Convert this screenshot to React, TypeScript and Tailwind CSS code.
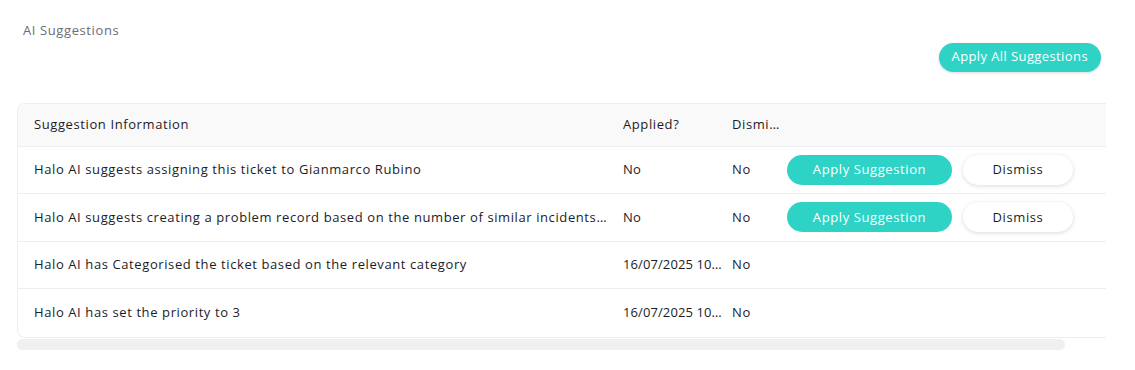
import React from 'react';

type Row = {
  info: string;
  applied: string;
  dismissed: string;
  actions: boolean;
};

const rows: Row[] = [
  { info: 'Halo AI suggests assigning this ticket to Gianmarco Rubino', applied: 'No', dismissed: 'No', actions: true },
  {
    info: 'Halo AI suggests creating a problem record based on the number of similar incidents logged recently',
    applied: 'No',
    dismissed: 'No',
    actions: true,
  },
  { info: 'Halo AI has Categorised the ticket based on the relevant category', applied: '16/07/2025 10:42', dismissed: 'No', actions: false },
  { info: 'Halo AI has set the priority to 3', applied: '16/07/2025 10:42', dismissed: 'No', actions: false },
];

const cols = 'grid grid-cols-[597px_109px_57px_1fr] items-center';

const App = () => {
  return (
    <div className="w-[1135px] h-[370px] bg-white font-['Open_Sans',sans-serif] text-[13px] tracking-[0.6px] text-[#1c1c28]">
      <div className="pl-[23px] pt-[21px] text-[13px] text-[#6b6b75]">AI Suggestions</div>

      <div className="flex justify-end pr-[34px] mt-[2px]">
        <button className="h-[29px] px-[13px] rounded-full bg-[#2ed3c6] text-white text-[13px] tracking-[0.4px] shadow-[0_1px_3px_rgba(0,0,0,0.15)]">
          Apply All Suggestions
        </button>
      </div>

      <div className="ml-[17px] mt-[31px] w-[1089px] overflow-hidden">
        <div className="border-l border-t border-b border-[#eceef3] rounded-l-lg">
          <div className={`${cols} h-[43px] bg-[#f9f9fa] border-b border-[#eceef3] rounded-tl-lg`}>
            <div className="pl-4">Suggestion Information</div>
            <div className="pl-2">Applied?</div>
            <div className="pl-2 truncate">Dismissed?</div>
            <div />
          </div>
          {rows.map((r, i) => (
            <div
              key={i}
              className={`${cols} h-[47.5px] ${i < rows.length - 1 ? 'border-b border-[#eceef3]' : ''}`}
            >
              <div className="pl-4 pr-2 truncate">{r.info}</div>
              <div className="pl-2 pr-[2px] truncate tracking-[0.1px]">{r.applied}</div>
              <div className="pl-2 truncate">{r.dismissed}</div>
              <div className="flex items-center gap-[11px] pl-[6px]">
                {r.actions && (
                  <>
                    <button className="w-[165px] h-[30px] rounded-full bg-[#2ed3c6] text-white text-[13px]">
                      Apply Suggestion
                    </button>
                    <button className="w-[110px] h-[30px] rounded-full bg-white text-[13px] text-[#1c1c28] shadow-[0_1px_4px_rgba(0,0,0,0.15)]">
                      Dismiss
                    </button>
                  </>
                )}
              </div>
            </div>
          ))}
        </div>
      </div>

      <div className="ml-[17px] mt-[1px] w-[1048px] h-[11px] rounded-full bg-[#f0f0f0]" />
    </div>
  );
};

export default App;
